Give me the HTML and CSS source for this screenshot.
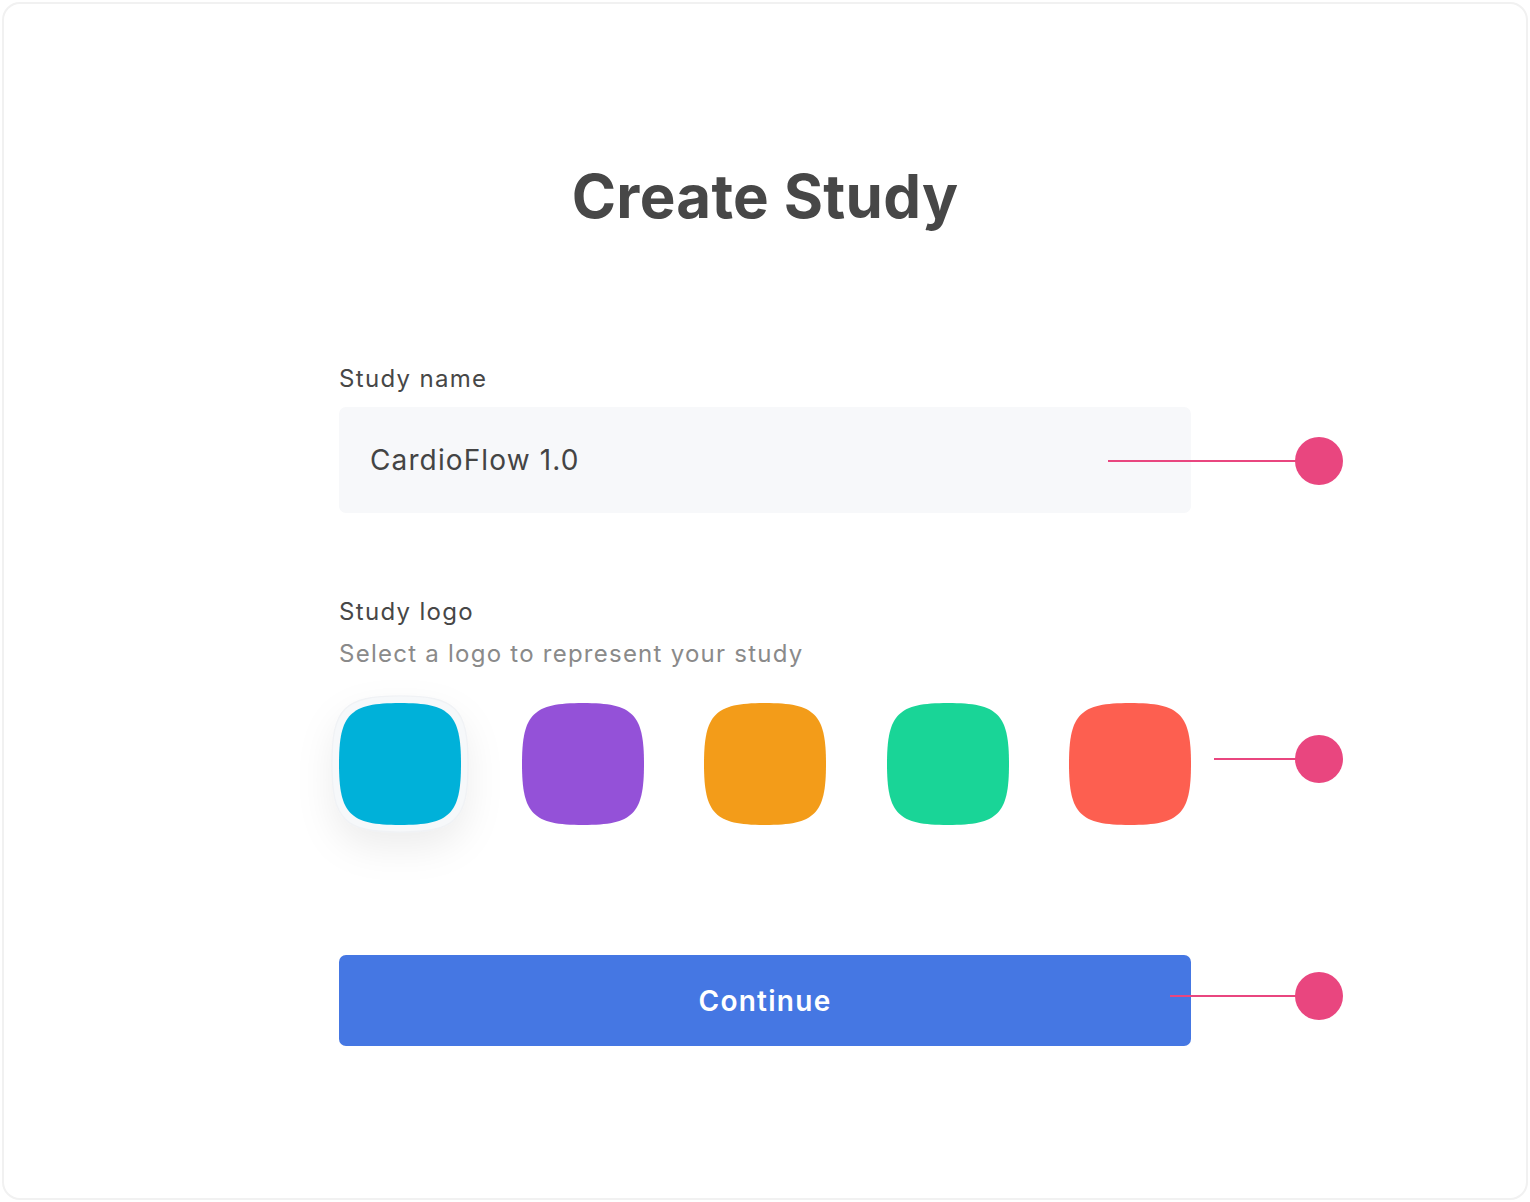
FILE: index.html
```html
<!DOCTYPE html>
<html lang="en">
<head>
    <meta charset="UTF-8">
    <meta name="viewport" content="width=device-width, initial-scale=1.0">
    <title>Create Study</title>
    <link rel="stylesheet" href="styles.css">
</head>
<body>
    <div class="frame">
        <h1>Create Study</h1>
        <form class="study-form">
            <div class="row">
                <label class="label" for="studyName">Study name</label>
                <input class="name-input" type="text" id="studyName" value="CardioFlow 1.0">
                <span class="note note-name"></span>
            </div>

            <div class="row row-logo">
                <div class="label">Study logo</div>
                <div class="hint">Select a logo to represent your study</div>
                <div class="logos">
                    <svg class="logo selected" viewBox="0 0 100 100">
                        <path class="ring" transform="translate(-5.8 -5.8) scale(1.116)" d="M0,50 C0,9 9,0 50,0 S100,9 100,50 S91,100 50,100 S0,91 0,50 Z"/>
                        <path fill="#00b1d9" d="M0,50 C0,9 9,0 50,0 S100,9 100,50 S91,100 50,100 S0,91 0,50 Z"/>
                    </svg>
                    <svg class="logo" viewBox="0 0 100 100">
                        <path fill="#9451d8" d="M0,50 C0,9 9,0 50,0 S100,9 100,50 S91,100 50,100 S0,91 0,50 Z"/>
                    </svg>
                    <svg class="logo" viewBox="0 0 100 100">
                        <path fill="#f39c19" d="M0,50 C0,9 9,0 50,0 S100,9 100,50 S91,100 50,100 S0,91 0,50 Z"/>
                    </svg>
                    <svg class="logo" viewBox="0 0 100 100">
                        <path fill="#19d597" d="M0,50 C0,9 9,0 50,0 S100,9 100,50 S91,100 50,100 S0,91 0,50 Z"/>
                    </svg>
                    <svg class="logo" viewBox="0 0 100 100">
                        <path fill="#fd5f50" d="M0,50 C0,9 9,0 50,0 S100,9 100,50 S91,100 50,100 S0,91 0,50 Z"/>
                    </svg>
                </div>
                <span class="note note-logo"></span>
            </div>

            <div class="row row-button">
                <button type="submit" class="continue">Continue</button>
                <span class="note note-button"></span>
            </div>
        </form>
    </div>
</body>
</html>
```

FILE: styles.css
```css
body {
    margin: 0;
    font-family: Inter, "Noto Sans", sans-serif;
    color: #454545;
    background: #fff;
}
.frame {
    margin: 2px;
    height: 1198px;
    box-sizing: border-box;
    border: 2px solid #f1f1f1;
    border-radius: 18px;
    padding-top: 156px;
}
h1 {
    margin: 0;
    text-align: center;
    font-size: 60px;
    line-height: 72px;
    font-weight: 700;
    color: #474747;
    letter-spacing: 0.005em;
}
.study-form {
    width: 852px;
    margin: 132px auto 0;
}
.row {
    position: relative;
}
.label {
    display: block;
    font-size: 24px;
    line-height: 30px;
    letter-spacing: 0.055em;
    color: #474747;
}
.name-input {
    display: block;
    width: 100%;
    height: 106px;
    margin-top: 13px;
    padding: 0 31px;
    box-sizing: border-box;
    border: none;
    border-radius: 7px;
    background: #f7f8fa;
    font-family: inherit;
    font-size: 28px;
    letter-spacing: 0.04em;
    color: #444;
    outline: none;
}
.row-logo {
    margin-top: 84px;
}
.hint {
    margin-top: 12px;
    font-size: 24px;
    line-height: 30px;
    letter-spacing: 0.052em;
    color: #8a8a8a;
}
.logos {
    display: flex;
    justify-content: space-between;
    margin-top: 34px;
}
.logo {
    width: 122px;
    height: 122px;
    overflow: visible;
}
.logo.selected {
    filter: drop-shadow(0 16px 18px rgba(0, 0, 0, 0.07));
}
.ring {
    fill: #f6f8fa;
    stroke: #f0f2f5;
    stroke-width: 1;
}
.row-button {
    margin-top: 130px;
}
.continue {
    display: block;
    width: 100%;
    height: 91px;
    border: none;
    border-radius: 7px;
    background: #4577e3;
    color: #fff;
    font-family: inherit;
    font-size: 28px;
    font-weight: 600;
    letter-spacing: 0.045em;
    padding-top: 2px;
    cursor: pointer;
}

/* annotation markers */
.note {
    position: absolute;
    left: 769px;
    width: 188px;
    height: 2px;
    background: #e9467f;
}
.note::after {
    content: "";
    position: absolute;
    left: 187px;
    top: -23px;
    width: 48px;
    height: 48px;
    border-radius: 50%;
    background: #e9467f;
}
.note-name {
    top: 96px;
}
.note-logo {
    left: 875px;
    width: 82px;
    top: 161px;
}
.note-logo::after {
    left: 81px;
}
.note-button {
    left: 831px;
    width: 126px;
    top: 40px;
}
.note-button::after {
    left: 125px;
}
```
